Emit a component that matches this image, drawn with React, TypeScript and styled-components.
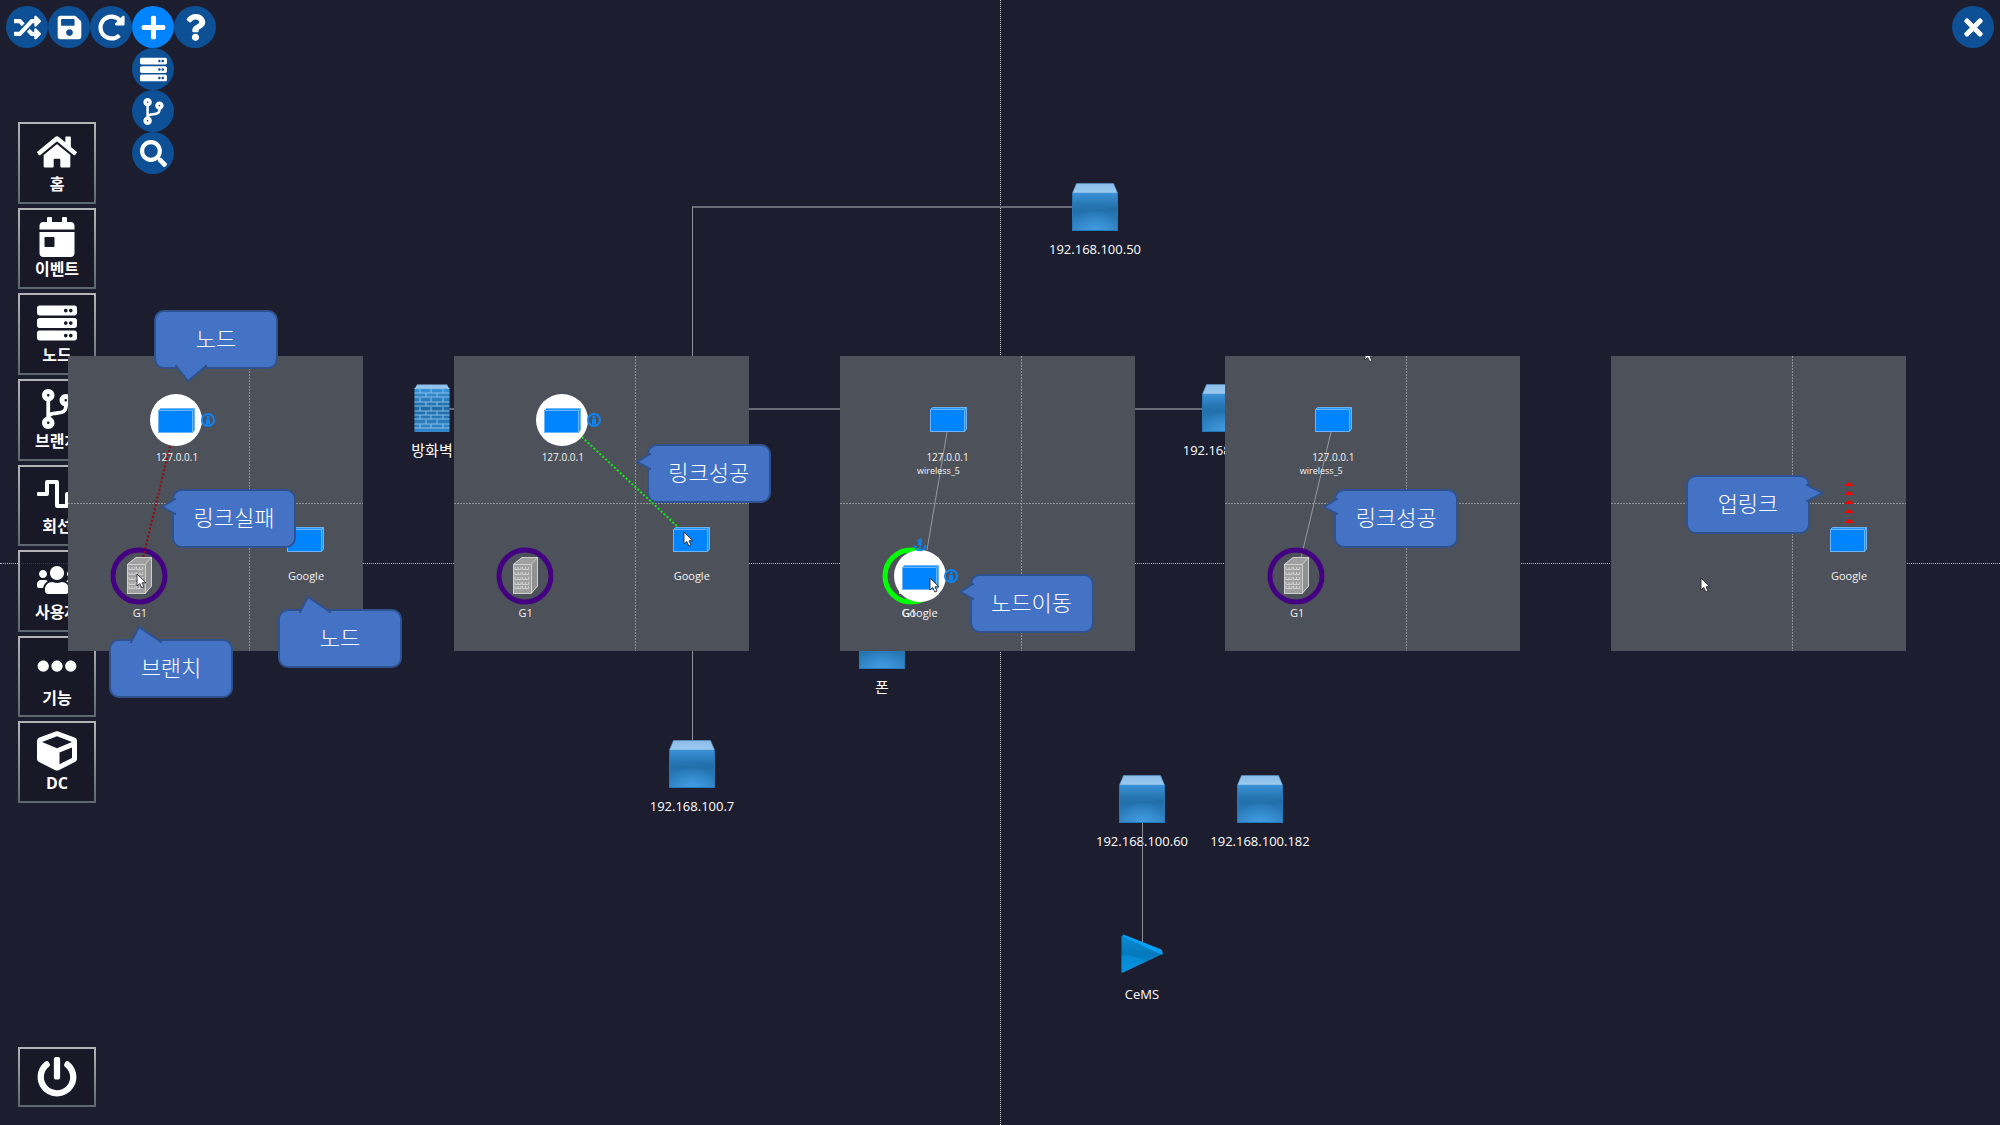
import React, { useState } from "react";
import styled, { createGlobalStyle, css } from "styled-components";
import {
  FaAnchor,
  FaCalendarDay,
  FaCodeBranch,
  FaCube,
  FaEllipsisH,
  FaHome,
  FaPlus,
  FaPowerOff,
  FaQuestion,
  FaRandom,
  FaRedoAlt,
  FaSave,
  FaSearch,
  FaServer,
  FaTimes,
  FaUsers,
  FaWaveSquare,
} from "react-icons/fa";

const font = `"Open Sans", "Noto Sans", "Noto Sans CJK KR", sans-serif`;

const GlobalStyle = createGlobalStyle`
  *, *::before, *::after { box-sizing: border-box; }
  html, body { margin: 0; background: #1c1d2e; }
  body { font-family: ${font}; color: #fff; }
  button { font-family: inherit; color: inherit; cursor: pointer; }
`;

const Page = styled.div`
  position: relative;
  display: flex;
  flex-direction: column;
  min-height: 100vh;
  overflow: hidden;
`;

/* ---------- top bar ---------- */

const TopBar = styled.header`
  position: relative;
  display: flex;
  justify-content: space-between;
  padding: 6px;
`;

const Tools = styled.div`
  display: flex;
`;

const RoundButton = styled.button<{ $active?: boolean }>`
  display: grid;
  place-items: center;
  width: 42px;
  height: 42px;
  padding: 0;
  border: 0;
  border-radius: 50%;
  background: ${(p) => (p.$active ? "#0384ff" : "#0d5096")};
  font-size: 27px;
`;

const MenuAnchor = styled.div`
  position: relative;
`;

const DropMenu = styled.div`
  position: absolute;
  top: 100%;
  left: 0;
`;

/* ---------- side rail ---------- */

const Rail = styled.aside`
  position: relative;
  display: flex;
  flex: 1;
  flex-direction: column;
  justify-content: space-between;
  width: 96px;
  padding: 68px 0 18px 18px;
`;

const RailNav = styled.nav`
  display: grid;
  grid-auto-rows: 1fr;
  gap: 4px;
  height: 681px;
`;

const RailButton = styled.button<{ $height?: number }>`
  display: flex;
  flex-direction: column;
  align-items: center;
  justify-content: center;
  gap: 2px;
  width: 78px;
  ${(p) => p.$height && `height: ${p.$height}px;`}
  padding: 0;
  border: 2px solid;
  border-image: linear-gradient(#b4b4b6, #5c686e) 1;
  background: rgba(24, 24, 37, 0.8);
  font-size: 40px;
`;

const RailLabel = styled.span`
  font-size: 16px;
  font-weight: 700;
  line-height: 20px;
`;

/* ---------- network map ---------- */

const Map = styled.main`
  position: absolute;
  inset: 0;
`;

const AxisX = styled.div`
  position: absolute;
  left: 0;
  right: 0;
  top: 50%;
  border-top: 1px dotted #b4b4ba;
`;

const AxisY = styled.div`
  position: absolute;
  top: 0;
  bottom: 0;
  left: 50%;
  border-left: 1px dotted #d4d4d8;
`;

const MapLinks = styled.svg`
  position: absolute;
  inset: 0;
  width: 100%;
  height: 100%;
  fill: none;
`;

const MapNodeBox = styled.div<{ $x: number; $y: number }>`
  position: absolute;
  left: ${(p) => p.$x - 70}px;
  top: ${(p) => p.$y}px;
  display: flex;
  flex-direction: column;
  align-items: center;
  gap: 8px;
  width: 140px;
  font-size: 13px;
  line-height: 20px;

  svg {
    height: 48px;
  }
`;

const Hangul = styled.span`
  font-size: 15px;
`;

/* ---------- step panels ---------- */

const Steps = styled.section`
  position: absolute;
  top: 356px;
  left: 0;
  right: 0;
  display: flex;
  justify-content: space-between;
  padding: 0 94px 0 68px;
`;

const Step = styled.article`
  position: relative;
  width: 295px;
  height: 295px;
`;

const StepView = styled.div`
  position: absolute;
  inset: 0;
  overflow: hidden;
  background: #4d5159;
`;

const StepDrawing = styled.svg<{ $front?: boolean }>`
  position: absolute;
  inset: 0;
  z-index: ${(p) => (p.$front ? 2 : "auto")};
  width: 100%;
  height: 100%;
`;

const StepLabel = styled.span<{ $x: number; $y: number; $size: number }>`
  position: absolute;
  left: ${(p) => p.$x - 40}px;
  top: ${(p) => p.$y - 8}px;
  width: 80px;
  color: #f4f4f5;
  font-size: ${(p) => p.$size}px;
  line-height: 16px;
  text-align: center;
`;

const CalloutBox = styled.div<{ $x: number; $y: number }>`
  position: absolute;
  left: ${(p) => p.$x}px;
  top: ${(p) => p.$y}px;
  z-index: 1;
  display: grid;
  place-items: center;
  width: 124px;
  height: 59px;
  padding-bottom: 6px;
  border: 2px solid #2f528f;
  border-radius: 10px;
  background: #4472c4;
  font-family: "Noto Sans CJK KR", sans-serif;
  font-size: 22px;
  font-weight: 300;
  line-height: 32px;
`;

type Side = "up" | "down" | "left" | "right";

const tailPlace: Record<Side, ReturnType<typeof css>> = {
  up: css`
    left: 20px;
    bottom: 100%;
    margin-bottom: -2px;
  `,
  down: css`
    left: 20px;
    top: 100%;
    margin-top: -2px;
  `,
  left: css`
    right: 100%;
    top: 8px;
    margin-right: -2px;
  `,
  right: css`
    left: 100%;
    top: 8px;
    margin-left: -2px;
  `,
};

const Tail = styled.svg<{ $side: Side }>`
  position: absolute;
  overflow: visible;
  fill: #4472c4;
  stroke: #2f528f;
  stroke-width: 2;
  ${(p) => tailPlace[p.$side]}
`;

const tails: Record<Side, { w: number; h: number; d: string }> = {
  up: { w: 30, h: 18, d: "M0 18 L0 17 L8 2 L30 17 L30 18" },
  down: { w: 30, h: 18, d: "M0 0 L0 1 L12 16 L30 1 L30 0" },
  left: { w: 14, h: 15, d: "M14 0 L13 0 L0 8 L13 15 L14 15" },
  right: { w: 18, h: 17, d: "M0 0 L1 0 L17 8 L1 16 L0 16" },
};

function Callout({ x, y, side, children }: { x: number; y: number; side: Side; children: string }) {
  const tail = tails[side];
  return (
    <CalloutBox $x={x} $y={y}>
      <Tail $side={side} width={tail.w} height={tail.h} aria-hidden="true">
        <path d={tail.d} />
      </Tail>
      {children}
    </CalloutBox>
  );
}

/* ---------- drawings ---------- */

const Defs = styled.svg`
  position: absolute;
`;

function Gradients() {
  return (
    <Defs width="0" height="0" aria-hidden="true">
      <defs>
        <linearGradient id="face" x1="0" y1="0" x2="0" y2="1">
          <stop offset="0" stopColor="#3a92d8" />
          <stop offset="0.45" stopColor="#1f6aa3" />
          <stop offset="0.6" stopColor="#2474b0" />
          <stop offset="1" stopColor="#3487cb" />
        </linearGradient>
        <radialGradient id="glow" cx="0.5" cy="1" r="0.55">
          <stop offset="0" stopColor="#429ce2" />
          <stop offset="1" stopColor="#429ce2" stopOpacity="0" />
        </radialGradient>
        <linearGradient id="lid" x1="0" y1="0" x2="0" y2="1">
          <stop offset="0" stopColor="#8abce8" />
          <stop offset="1" stopColor="#9ccaf0" />
        </linearGradient>
        <linearGradient id="play" x1="0" y1="0" x2="0" y2="1">
          <stop offset="0" stopColor="#0b8bd4" />
          <stop offset="0.5" stopColor="#0479bb" />
          <stop offset="1" stopColor="#0590dc" />
        </linearGradient>
      </defs>
    </Defs>
  );
}

function CubeIcon() {
  return (
    <svg width="46" height="48" viewBox="0 0 46 48" aria-hidden="true">
      <path d="M4.5 0.5H41.5L45.5 10H0.5Z" fill="url(#lid)" stroke="#5b9bd2" strokeWidth="0.6" />
      <path d="M0 10H46V48H0Z" fill="url(#face)" />
      <path d="M0 22Q24 21 46 28V48H0Z" fill="#2c80c0" opacity="0.25" />
      <path d="M0 10H46V48H0Z" fill="url(#glow)" />
      <path d="M0.5 10V47.5H45.5V10" fill="none" stroke="#2677b5" />
    </svg>
  );
}

function FirewallIcon() {
  const rows = [9, 13, 18, 22, 27, 31, 35, 40, 44];
  return (
    <svg width="36" height="48" viewBox="0 0 36 48" aria-hidden="true">
      <path d="M3 0.5H33L35.5 5H0.5Z" fill="url(#lid)" />
      <path d="M0.5 5H35.5V48H0.5Z" fill="url(#face)" />
      <g stroke="#86bfea" strokeWidth="1">
        {[4.5, ...rows].map((y) => (
          <path key={y} d={`M0.5 ${y}H35.5`} />
        ))}
        {rows.map((y, i) => (
          <path key={y} d={i % 2 ? `M12 ${y - 4}v4M23 ${y - 4}v4` : `M6 ${y - 4}v4M17 ${y - 4}v4M29 ${y - 4}v4`} />
        ))}
      </g>
    </svg>
  );
}

function PlayIcon() {
  return (
    <svg width="42" height="48" viewBox="0 3 42 48" aria-hidden="true">
      <path d="M1 11 38 24 41.5 29 2 47.5H0.5V11Z" fill="url(#play)" />
      <path d="M0.5 30Q16 30 24 37L2 47.5H0.5Z" fill="#0596e6" opacity="0.5" />
      <path d="M1 11 2.5 9.5 40.5 24.5Q42 28 41.5 29.5L38 28.5Z" fill="#08a0f5" />
    </svg>
  );
}

const Box = ({ x, y }: { x: number; y: number }) => (
  <g transform={`translate(${x - 18} ${y - 12})`} stroke="#6cb4fb" strokeWidth="1" strokeLinejoin="round">
    <path d="M0.5 2.5 2.5 0.5H36.5V22L34.5 24.5H0.5Z" fill="#2094ff" />
    <path d="M0.5 2.5H34.5V24.5H0.5Z" fill="#0084ff" />
    <path d="M34.5 2.5 36.5 0.5" />
  </g>
);

const Building = ({ x, y }: { x: number; y: number }) => (
  <g transform={`translate(${x - 12} ${y - 19})`}>
    <path d="M0 7 9 0H25V29L18 37H0Z" fill="#a0a0a0" />
    <path d="M18 7 25 0V29L18 37Z" fill="#919191" />
    <path
      d="M0.5 7.5 9 0.5H24.5V29L18 36.5H0.5ZM0.5 7.5H18M18 7.5 24.5 0.5M18.5 7.5V36.5"
      fill="none"
      stroke="#cfcfcf"
    />
    {[10, 15, 20, 25, 29].map((row) => (
      <path
        key={row}
        d={`M2 ${row}v2.5h6v-2.5M5 ${row}v2M9.5 ${row}v2.5h6v-2.5M12.5 ${row}v2`}
        fill="none"
        stroke="#d6d6d6"
        strokeWidth="0.9"
      />
    ))}
  </g>
);

const Ring = ({ x, y, color }: { x: number; y: number; color: string }) => (
  <circle cx={x} cy={y} r="26" fill="none" stroke={color} strokeWidth="5" />
);

const Info = ({ x, y }: { x: number; y: number }) => (
  <g fill="#0c84f5">
    <circle cx={x} cy={y} r="6" fill="none" stroke="#0c84f5" strokeWidth="2" />
    <circle cx={x} cy={y - 3} r="1.5" />
    <path d={`M${x - 2} ${y - 1}h4v5.5h-4z`} />
  </g>
);

const Cursor = ({ x, y }: { x: number; y: number }) => (
  <path
    transform={`translate(${x} ${y})`}
    d="M0 0V12L2.8 9.5 4.8 14 7 13 5 8.8H9Z"
    fill="#fff"
    stroke="#22252e"
    strokeWidth="0.9"
  />
);

function StepAxes() {
  return (
    <g stroke="#8f9297" strokeDasharray="2 1">
      <path d="M181.5 0V295M0 147.5H295" />
    </g>
  );
}

/* ---------- data ---------- */

const railItems = [
  { icon: FaHome, label: "홈" },
  { icon: FaCalendarDay, label: "이벤트" },
  { icon: FaServer, label: "노드" },
  { icon: FaCodeBranch, label: "브랜치" },
  { icon: FaWaveSquare, label: "회선" },
  { icon: FaUsers, label: "사용자" },
  { icon: FaEllipsisH, label: "기능" },
  { icon: FaCube, label: "DC" },
];

const mapNodes = [
  { x: 1095, y: 183, label: "192.168.100.50" },
  { x: 692, y: 740, label: "192.168.100.7" },
  { x: 1142, y: 775, label: "192.168.100.60" },
  { x: 1260, y: 775, label: "192.168.100.182" },
  { x: 1225, y: 384, label: "192.168.100.1" },
];

export default function App() {
  const [menuOpen, setMenuOpen] = useState(true);

  return (
    <Page>
      <GlobalStyle />
      <Gradients />

      <Map>
        <AxisX />
        <AxisY />
        <MapLinks aria-hidden="true">
          <path d="M1072 207H692M449 409H1202" stroke="#696a75" strokeWidth="2" />
          <path d="M692.5 207V740" stroke="#8f9098" />
        </MapLinks>
        {mapNodes.map((n) => (
          <MapNodeBox key={n.label} $x={n.x} $y={n.y}>
            <CubeIcon />
            <span>{n.label}</span>
          </MapNodeBox>
        ))}
        <MapNodeBox $x={432} $y={384}>
          <FirewallIcon />
          <Hangul>방화벽</Hangul>
        </MapNodeBox>
        <MapNodeBox $x={882} $y={621}>
          <CubeIcon />
          <Hangul>폰</Hangul>
        </MapNodeBox>
        <MapNodeBox $x={1142} $y={928}>
          <PlayIcon />
          <span>CeMS</span>
        </MapNodeBox>
        <MapLinks aria-hidden="true">
          <path d="M1142.5 823V942" stroke="#8f9098" />
        </MapLinks>
      </Map>

      <TopBar>
        <Tools>
          <RoundButton aria-label="섞기"><FaRandom /></RoundButton>
          <RoundButton aria-label="저장"><FaSave /></RoundButton>
          <RoundButton aria-label="새로고침"><FaRedoAlt /></RoundButton>
          <MenuAnchor>
            <RoundButton $active={menuOpen} aria-label="추가" aria-expanded={menuOpen} onClick={() => setMenuOpen(!menuOpen)}>
              <FaPlus />
            </RoundButton>
            {menuOpen && (
              <DropMenu>
                <RoundButton aria-label="노드 추가"><FaServer /></RoundButton>
                <RoundButton aria-label="브랜치 추가"><FaCodeBranch /></RoundButton>
                <RoundButton aria-label="검색"><FaSearch /></RoundButton>
              </DropMenu>
            )}
          </MenuAnchor>
          <RoundButton aria-label="도움말"><FaQuestion /></RoundButton>
        </Tools>
        <RoundButton aria-label="닫기"><FaTimes /></RoundButton>
      </TopBar>

      <Rail>
        <RailNav>
          {railItems.map(({ icon: Icon, label }) => (
            <RailButton key={label}>
              <Icon />
              <RailLabel>{label}</RailLabel>
            </RailButton>
          ))}
        </RailNav>
        <RailButton $height={60} aria-label="종료"><FaPowerOff /></RailButton>
      </Rail>

      <Steps>
        <Step>
          <StepView>
            <StepDrawing aria-hidden="true">
              <StepAxes />
              <circle cx="108" cy="64" r="26" fill="#fff" />
              <Box x={108} y={64} />
              <Info x={140} y={64} />
              <Box x={237} y={183} />
              <Ring x={71} y={220} color="#430082" />
              <Building x={71} y={220} />
            </StepDrawing>
            <StepLabel $x={109} $y={101} $size={10}>127.0.0.1</StepLabel>
            <StepLabel $x={238} $y={220} $size={11}>Google</StepLabel>
            <StepLabel $x={72} $y={257} $size={11}>G1</StepLabel>
            <StepDrawing aria-hidden="true">
              <path d="M102 90 75 202" stroke="#960a0e" strokeWidth="2" strokeDasharray="2 2" />
              <Cursor x={69} y={218} />
            </StepDrawing>
          </StepView>
          <Callout x={86} y={-46} side="down">노드</Callout>
          <Callout x={104} y={133} side="left">링크실패</Callout>
          <Callout x={41} y={283} side="up">브랜치</Callout>
          <Callout x={210} y={253} side="up">노드</Callout>
        </Step>

        <Step>
          <StepView>
            <StepDrawing aria-hidden="true">
              <StepAxes />
              <circle cx="108" cy="64" r="26" fill="#fff" />
              <Box x={108} y={64} />
              <Info x={140} y={64} />
              <Box x={237} y={183} />
              <Ring x={71} y={220} color="#430082" />
              <Building x={71} y={220} />
            </StepDrawing>
            <StepLabel $x={109} $y={101} $size={10}>127.0.0.1</StepLabel>
            <StepLabel $x={238} $y={220} $size={11}>Google</StepLabel>
            <StepLabel $x={72} $y={257} $size={11}>G1</StepLabel>
          </StepView>
          <Callout x={193} y={88} side="left">링크성공</Callout>
          <StepDrawing $front aria-hidden="true">
            <path d="M128 81 224 171" stroke="#0ff00f" strokeWidth="2" strokeDasharray="2 2" />
            <Cursor x={230} y={176} />
          </StepDrawing>
        </Step>

        <Step>
          <StepView>
            <StepDrawing aria-hidden="true">
              <StepAxes />
              <Box x={108} y={63} />
              <path d="M107 76 87 194" stroke="#97999d" />
              <Ring x={71} y={220} color="#00ff00" />
              <Building x={71} y={220} />
              <circle cx="80" cy="220" r="26" fill="#fff" />
              <Box x={80} y={221} />
              <Info x={111} y={220} />
              <FaAnchor x={73} y={182} size={14} color="#0c84f5" />
            </StepDrawing>
            <StepLabel $x={108} $y={101} $size={10}>127.0.0.1</StepLabel>
            <StepLabel $x={99} $y={115} $size={9}>wireless_5</StepLabel>
            <StepLabel $x={70} $y={257} $size={11}>G1</StepLabel>
            <StepLabel $x={80} $y={257} $size={11}>Google</StepLabel>
            <StepDrawing aria-hidden="true">
              <Cursor x={90} y={222} />
            </StepDrawing>
          </StepView>
          <Callout x={130} y={218} side="left">노드이동</Callout>
        </Step>

        <Step>
          <StepView>
            <StepDrawing aria-hidden="true">
              <StepAxes />
              <Box x={108} y={63} />
              <path d="M106 76 76 202" stroke="#97999d" />
              <Ring x={71} y={220} color="#430082" />
              <Building x={71} y={220} />
              <Cursor x={140} y={-8} />
            </StepDrawing>
            <StepLabel $x={108} $y={101} $size={10}>127.0.0.1</StepLabel>
            <StepLabel $x={96} $y={115} $size={9}>wireless_5</StepLabel>
            <StepLabel $x={72} $y={257} $size={11}>G1</StepLabel>
          </StepView>
          <Callout x={109} y={133} side="left">링크성공</Callout>
        </Step>

        <Step>
          <StepView>
            <StepDrawing aria-hidden="true">
              <StepAxes />
              {[126, 135, 144, 153, 163].map((y) => (
                <path key={y} d={`M233 ${y + 4}L238 ${y}L243 ${y + 4}Z`} fill="#f00" />
              ))}
              <Box x={237} y={183} />
              <Cursor x={90} y={222} />
            </StepDrawing>
            <StepLabel $x={238} $y={220} $size={11}>Google</StepLabel>
          </StepView>
          <Callout x={75} y={119} side="right">업링크</Callout>
        </Step>
      </Steps>
    </Page>
  );
}
